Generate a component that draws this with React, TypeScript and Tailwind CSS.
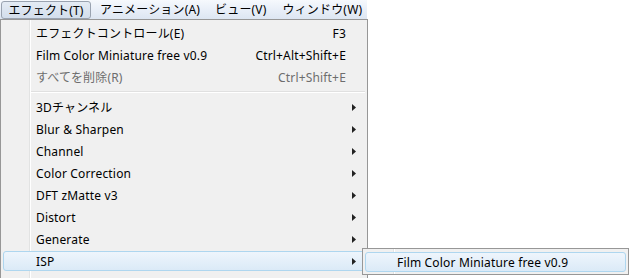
import { ReactNode } from "react";

const font = { fontFamily: '"Noto Sans", "Noto Sans CJK JP", sans-serif' };

const Arrow = () => (
  <svg width="4" height="7" viewBox="0 0 4 7" className="block">
    <path d="M0 0 L4 3.5 L0 7 Z" fill="#222" />
  </svg>
);

type Item = { label: string; shortcut?: string; disabled?: boolean; sub?: boolean; active?: boolean };

const top: Item[] = [
  { label: "エフェクトコントロール(E)", shortcut: "F3" },
  { label: "Film Color Miniature free v0.9", shortcut: "Ctrl+Alt+Shift+E" },
  { label: "すべてを削除(R)", shortcut: "Ctrl+Shift+E", disabled: true },
];

const groups: Item[] = [
  { label: "3Dチャンネル", sub: true },
  { label: "Blur & Sharpen", sub: true },
  { label: "Channel", sub: true },
  { label: "Color Correction", sub: true },
  { label: "DFT zMatte v3", sub: true },
  { label: "Distort", sub: true },
  { label: "Generate", sub: true },
  { label: "ISP", sub: true, active: true },
];

const Highlight = ({ children }: { children: ReactNode }) => (
  <div className="relative h-[22px]">
    <div className="absolute inset-x-[2px] inset-y-px rounded-[3px] border border-[#aed6ef] bg-gradient-to-b from-[#eef5fc] to-[#dbeaf7]" />
    <div className="relative h-full">{children}</div>
  </div>
);

const Row = ({ item }: { item: Item }) => {
  const body = (
    <div className={`flex h-[22px] items-center pl-[35px] pr-[11px] pt-px ${item.disabled ? "text-[#6d6d6d]" : "text-black"}`}>
      <span className="flex-1 whitespace-nowrap">{item.label}</span>
      {item.shortcut && <span className="mr-[10px] whitespace-nowrap">{item.shortcut}</span>}
      {item.sub && <Arrow />}
    </div>
  );
  return item.active ? <Highlight>{body}</Highlight> : body;
};

export default function App() {
  return (
    <div className="relative h-[278px] w-[633px] overflow-hidden bg-white text-[12px] leading-none tracking-[0.17px]" style={font}>
      <div className="flex h-[19px] w-[367px] items-stretch bg-gradient-to-b from-[#f6f9fd] via-[#e9eff8] to-[#dde6f2] text-black">
        <div className="ml-px mt-px flex w-[90px] items-center justify-center rounded-[3px] border border-[#9aa3b0] bg-gradient-to-b from-[#e4ebf4] to-[#d3deec] pt-px">
          エフェクト(T)
        </div>
        <div className="flex items-center pl-[9px] pt-px">アニメーション(A)</div>
        <div className="flex items-center pl-[15px] pt-px">ビュー(V)</div>
        <div className="flex items-center pl-[16px] pt-px">ウィンドウ(W)</div>
      </div>

      <div className="relative h-[270px] w-[368px] border border-[#979797] bg-[#f0f0f0] pt-[2px]">
        <div className="absolute bottom-0 left-[28px] top-0 w-px bg-[#e2e3e3]" />
        <div className="absolute bottom-0 left-[29px] top-0 w-px bg-white" />
        {top.map((it) => (
          <Row key={it.label} item={it} />
        ))}
        <div className="flex h-[8px] flex-col justify-center pl-[30px] pr-[2px]">
          <div className="h-px bg-[#e0e0e0]" />
          <div className="h-px bg-white" />
        </div>
        {groups.map((it) => (
          <Row key={it.label} item={it} />
        ))}
      </div>

      <div className="absolute left-[362px] top-[248px] h-[27px] w-[267px] border border-[#979797] bg-[#f0f0f0] pt-[2px]">
        <div className="absolute bottom-0 left-[30px] top-0 w-px bg-[#e2e3e3]" />
        <div className="absolute bottom-0 left-[31px] top-0 w-px bg-white" />
        <Highlight>
          <div className="flex h-[22px] items-center whitespace-nowrap pl-[34px] pt-px">Film Color Miniature free v0.9</div>
        </Highlight>
      </div>
    </div>
  );
}
